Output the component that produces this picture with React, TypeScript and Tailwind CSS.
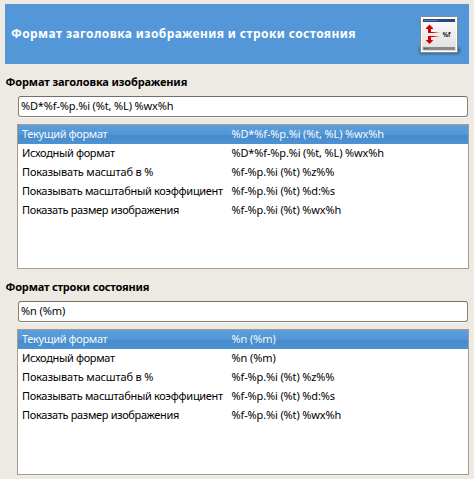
type Row = { label: string; value: string; labelClass: string; valueClass: string };

const presets: Row[] = [
  { label: 'Показывать масштаб в %', value: '%f-%p.%i (%t) %z%%', labelClass: 'tracking-[-0.17px]', valueClass: 'tracking-[-0.14px]' },
  { label: 'Показывать масштабный коэффициент', value: '%f-%p.%i (%t) %d:%s', labelClass: 'tracking-[-0.3px]', valueClass: 'tracking-[-0.14px]' },
  { label: 'Показать размер изображения', value: '%f-%p.%i (%t) %wx%h', labelClass: 'tracking-[-0.33px]', valueClass: 'tracking-[-0.14px]' },
];

function HeaderIcon() {
  return (
    <svg width="48" height="48" viewBox="0 0 48 48" className="mt-1 shrink-0">
      <defs>
        <linearGradient id="page" x1="0" y1="0" x2="0" y2="1">
          <stop offset="0" stopColor="#ffffff" />
          <stop offset="1" stopColor="#dcdcdc" />
        </linearGradient>
        <linearGradient id="tail" x1="0" y1="0" x2="1" y2="0">
          <stop offset="0.4" stopColor="#d40000" />
          <stop offset="1" stopColor="#d40000" stopOpacity="0" />
        </linearGradient>
        <filter id="soft" x="-20%" y="-60%" width="140%" height="220%">
          <feGaussianBlur stdDeviation="1.6" />
        </filter>
      </defs>
      <rect x="3" y="35" width="41" height="7" rx="3" fill="#173b63" opacity="0.6" filter="url(#soft)" />
      <rect x="4.5" y="4.5" width="37" height="36" rx="1" fill="url(#page)" stroke="#888a85" />
      <rect x="5.5" y="5.5" width="35" height="34" fill="none" stroke="#fff" />
      <rect x="7" y="7" width="32" height="3" fill="#204a87" />
      <path d="M8 8.5H22" stroke="#8ba3c8" strokeWidth="0.8" strokeDasharray="1 .5" />
      <rect x="7" y="35" width="32" height="3" fill="#888a85" />
      <path d="M8 36.5H13" stroke="#555753" strokeDasharray="1 .5" />
      <path d="M13.5 12.5L17 16V17H15V21H12V17H10V16ZM13.5 32L17 28.5V28H15V24H12V28H10V28.5Z" fill="#d40000" />
      <rect x="12" y="20" width="12" height="1" fill="url(#tail)" />
      <rect x="12" y="24" width="12" height="1" fill="url(#tail)" />
      <text x="26.5" y="25" fontFamily="Open Sans, sans-serif" fontSize="6.5" fontWeight="700" textLength="8" lengthAdjust="spacingAndGlyphs" fill="#222">%f</text>
    </svg>
  );
}

type SectionProps = { title: string; titleClass: string; current: string; currentClass: string; listClass: string };

function FormatSection({ title, titleClass, current, currentClass, listClass }: SectionProps) {
  const rows: Row[] = [
    { label: 'Текущий формат', value: current, labelClass: 'tracking-[-0.37px]', valueClass: currentClass },
    { label: 'Исходный формат', value: current, labelClass: 'tracking-[-0.35px]', valueClass: currentClass },
    ...presets,
  ];
  return (
    <section>
      <h2 className={`h-4 pl-[0.5px] text-[11px] leading-4 font-bold whitespace-nowrap ${titleClass}`}>{title}</h2>
      <div className="mt-[6px] mr-px ml-[13px] flex h-[21px] items-center rounded-[3px] border border-[#8c8072] border-t-[#786e65] bg-white px-[2px] text-[11px] whitespace-pre shadow-[0_1px_0_#f8f6f2]">
        <span className={currentClass}>{current}</span>
      </div>
      <div className={`mt-[7px] ml-3 border border-[#a69c8c] bg-white text-[11px] ${listClass}`}>
        {rows.map((row, i) => (
          <div
            key={row.label}
            className={`grid h-[19px] grid-cols-[209.5px_1fr] items-center pl-1 whitespace-nowrap ${
              i === 0 ? 'bg-[linear-gradient(#5c9fdc_0%,#5195d5_52%,#468acb_53%,#4d93d4_100%)] text-[#f4f9fe]' : ''
            }`}
          >
            <span className={row.labelClass}>{row.label}</span>
            <span className={row.valueClass}>{row.value}</span>
          </div>
        ))}
      </div>
    </section>
  );
}

export default function App() {
  return (
    <main className="h-[479px] w-[474px] overflow-hidden bg-[#edeae3] px-[5px] pt-1 font-['Noto_Sans','Open_Sans',sans-serif] text-black">
      <header className="flex h-[60px] items-center justify-between bg-[#5497d8] pr-[5px] pl-[6px] text-white">
        <h1 className="text-[12px] leading-4 font-bold tracking-[0.4px] whitespace-nowrap">Формат заголовка изображения и строки состояния</h1>
        <HeaderIcon />
      </header>
      <div className="mt-[10px] flex flex-col gap-[10px]">
        <FormatSection
          title="Формат заголовка изображения"
          titleClass="tracking-[-0.13px]"
          current="%D*%f-%p.%i (%t, %L) %wx%h"
          currentClass="tracking-[-0.15px]"
          listClass="h-[145px]"
        />
        <FormatSection
          title="Формат строки состояния"
          titleClass="tracking-[-0.2px]"
          current="%n (%m)"
          currentClass="tracking-[-0.1px]"
          listClass="h-[146px]"
        />
      </div>
    </main>
  );
}
